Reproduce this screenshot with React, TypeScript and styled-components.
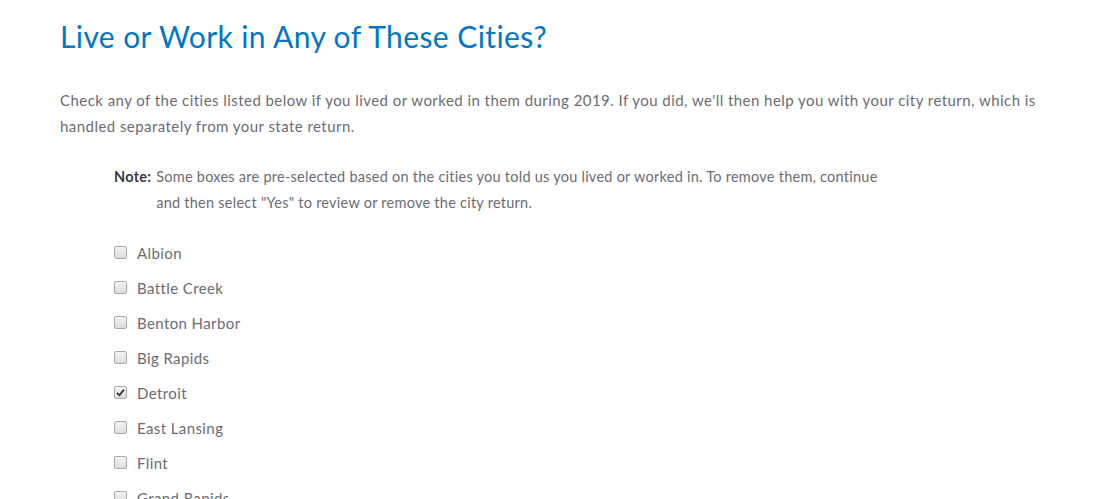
import React from "react";
import styled, { createGlobalStyle } from "styled-components";

const Global = createGlobalStyle`
  html, body { margin: 0; padding: 0; background: #fff; }
  body { font-family: "Lato", "Open Sans", sans-serif; overflow: hidden; }
`;

const Page = styled.div`
  padding: 16px 60px 0 60px;
  height: 499px;
  box-sizing: border-box;
  overflow: hidden;
`;

const Title = styled.h1`
  margin: 0;
  font-family: "Lato", sans-serif;
  font-weight: 400;
  font-size: 30px;
  letter-spacing: 0.4px;
  line-height: 40px;
  color: #0077c5;
`;

const Intro = styled.p`
  margin: 31px 0 0 0;
  max-width: 1000px;
  font-size: 15px;
  letter-spacing: 0.45px;
  line-height: 26px;
  color: #6b6c72;
`;

const Note = styled.div`
  display: flex;
  margin: 25px 0 0 54px;
  font-size: 14.5px;
  letter-spacing: 0.25px;
  line-height: 26px;
  color: #6b6c72;
`;

const NoteLabel = styled.span`
  font-weight: 700;
  color: #393a3d;
  margin-right: 5px;
  flex: none;
`;

const NoteText = styled.span`
  max-width: 735px;
`;

const List = styled.ul`
  list-style: none;
  margin: 19px 0 0 54px;
  padding: 0;
`;

const Row = styled.li`
  display: flex;
  align-items: center;
  height: 35px;
  font-size: 15px;
  letter-spacing: 0.4px;
  color: #6b6c72;
`;

const Box = styled.span<{ $checked?: boolean }>`
  width: 11px;
  height: 11px;
  border: 1px solid #a9a9a9;
  border-radius: 2px;
  background: linear-gradient(#f4f4f4, #dcdcdc);
  margin-right: 10px;
  display: flex;
  align-items: center;
  justify-content: center;
  flex: none;
`;

const cities: { name: string; checked?: boolean }[] = [
  { name: "Albion" },
  { name: "Battle Creek" },
  { name: "Benton Harbor" },
  { name: "Big Rapids" },
  { name: "Detroit", checked: true },
  { name: "East Lansing" },
  { name: "Flint" },
  { name: "Grand Rapids" },
];

export default function App() {
  return (
    <>
      <Global />
      <Page>
        <Title>Live or Work in Any of These Cities?</Title>
        <Intro>
          Check any of the cities listed below if you lived or worked in them during 2019. If you did, we'll then help you with your city return, which is handled separately from your state return.
        </Intro>
        <Note>
          <NoteLabel>Note:</NoteLabel>
          <NoteText>
            Some boxes are pre-selected based on the cities you told us you lived or worked in. To remove them, continue and then select "Yes" to review or remove the city return.
          </NoteText>
        </Note>
        <List>
          {cities.map((c) => (
            <Row key={c.name}>
              <Box $checked={c.checked}>
                {c.checked && (
                  <svg width="9" height="9" viewBox="0 0 9 9">
                    <path d="M1 4.8 L3.4 7.2 L8 1.6" stroke="#333" strokeWidth="1.8" fill="none" />
                  </svg>
                )}
              </Box>
              {c.name}
            </Row>
          ))}
        </List>
      </Page>
    </>
  );
}
